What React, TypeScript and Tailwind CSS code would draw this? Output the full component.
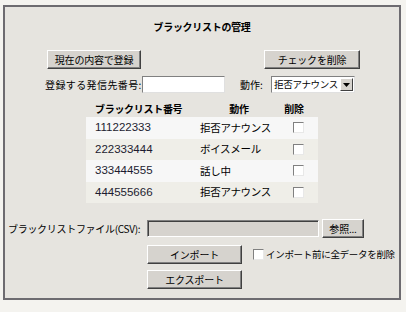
import { useState } from "react";

const rows = [
  { num: "111222333", action: "拒否アナウンス" },
  { num: "222333444", action: "ボイスメール" },
  { num: "333444555", action: "話し中" },
  { num: "444555666", action: "拒否アナウンス" },
];

const btn =
  "h-[19px] bg-[#d6d3ce] border border-t-white border-l-white border-r-[#404040] border-b-[#404040] shadow-[inset_-1px_-1px_0_#808080] text-[10px] tracking-[-0.2px] text-black leading-none flex items-center justify-center whitespace-nowrap";

const CheckBox = ({ checked, onChange }: { checked: boolean; onChange: () => void }) => (
  <button
    onClick={onChange}
    className="w-[11px] h-[11px] shrink-0 bg-white border border-t-[#808080] border-l-[#808080] border-r-[#e8e8e8] border-b-[#e8e8e8] flex items-center justify-center"
  >
    {checked && <span className="text-[9px] leading-none">✓</span>}
  </button>
);

const App = () => {
  const [checks, setChecks] = useState([false, false, false, false]);
  const [clearAll, setClearAll] = useState(false);
  const [number, setNumber] = useState("");

  return (
    <div
      className="w-[406px] h-[312px] bg-[#f4f3ef] pt-[5px] pl-[3px] whitespace-nowrap"
      style={{ fontFamily: '"Noto Sans CJK JP", sans-serif' }}
    >
      <div className="w-[398px] h-[295px] bg-[#e6e4df] border-2 border-[#6d6b70] flex flex-col text-black">
        <div className="text-center font-bold text-[10px] tracking-[-0.3px] mt-[12px] leading-[16px]">
          ブラックリストの管理
        </div>

        <div className="flex justify-between pl-[42px] pr-[39px] mt-[15px]">
          <button className={`${btn} w-[94px]`}>現在の内容で登録</button>
          <button className={`${btn} w-[96px]`}>チェックを削除</button>
        </div>

        <div className="flex items-center pl-[40px] mt-[7px] h-[17px] text-[10px]">
          <span className="w-[97px] tracking-[0.4px]">登録する発信先番号:</span>
          <input
            value={number}
            onChange={(e) => setNumber(e.target.value)}
            className="w-[83px] h-[17px] bg-white border border-t-[#808080] border-l-[#808080] border-r-[#e0e0e0] border-b-[#e0e0e0] outline-none px-1 text-[11px]"
          />
          <span className="ml-[15px] w-[31px]">動作:</span>
          <div className="w-[84px] h-[17px] bg-white border border-t-[#808080] border-l-[#808080] border-r-[#e0e0e0] border-b-[#e0e0e0] flex items-center">
            <span className="flex-1 pl-[2px] leading-none text-[9.5px] tracking-[-0.3px]">拒否アナウンス</span>
            <span className="w-[13px] h-[13px] mr-[1px] shrink-0 bg-[#d6d3ce] border border-t-white border-l-white border-r-[#404040] border-b-[#404040] flex items-center justify-center">
              <svg width="7" height="4" viewBox="0 0 7 4">
                <path d="M0 0h7L3.5 4z" fill="#000" />
              </svg>
            </span>
          </div>
        </div>

        <div className="w-[232px] mx-auto mt-[7px]">
          <div className="flex h-[17px] items-center font-bold text-[10px] tracking-[-0.3px]">
            <div className="w-[104px] pl-[9px]">ブラックリスト番号</div>
            <div className="w-[88px] text-center pl-[10px]">動作</div>
            <div className="flex-1 text-center pr-[8px]">削除</div>
          </div>
          {rows.map((r, i) => (
            <div
              key={r.num}
              className={`flex h-[21.5px] items-center text-[10.5px] ${
                i % 2 === 0 ? "bg-[#f7f7f7]" : "bg-[#efeee8]"
              }`}
            >
              <div
                className="w-[114px] pl-[9px] text-[11.5px] text-[#1c1c30]"
                style={{ fontFamily: '"Liberation Sans", sans-serif' }}
              >
                {r.num}
              </div>
              <div className="w-[93px] tracking-[-0.3px]">{r.action}</div>
              <CheckBox
                checked={checks[i]}
                onChange={() =>
                  setChecks(checks.map((c, j) => (j === i ? !c : c)))
                }
              />
            </div>
          ))}
        </div>

        <div className="flex items-center pl-[3px] mt-[16px] h-[19px] text-[10px] tracking-[-0.3px]">
          <span className="w-[139px]">ブラックリストファイル(CSV):</span>
          <div className="w-[172px] h-[17px] bg-[#d6d3ce] border border-t-[#808080] border-l-[#808080] border-r-white border-b-white shadow-[inset_1px_1px_0_#404040]" />
          <button className={`${btn} w-[42px] ml-[3px]`}>参照...</button>
        </div>

        <div className="flex items-center pl-[142px] mt-[7px]">
          <button className={`${btn} w-[95px]`}>インポート</button>
          <div className="ml-[11px] flex items-center gap-[2px]">
            <CheckBox checked={clearAll} onChange={() => setClearAll(!clearAll)} />
            <span className="text-[9.5px] tracking-[-0.3px]">インポート前に全データを削除</span>
          </div>
        </div>

        <div className="flex pl-[142px] mt-[6px]">
          <button className={`${btn} w-[95px]`}>エクスポート</button>
        </div>
      </div>
    </div>
  );
};

export default App;
